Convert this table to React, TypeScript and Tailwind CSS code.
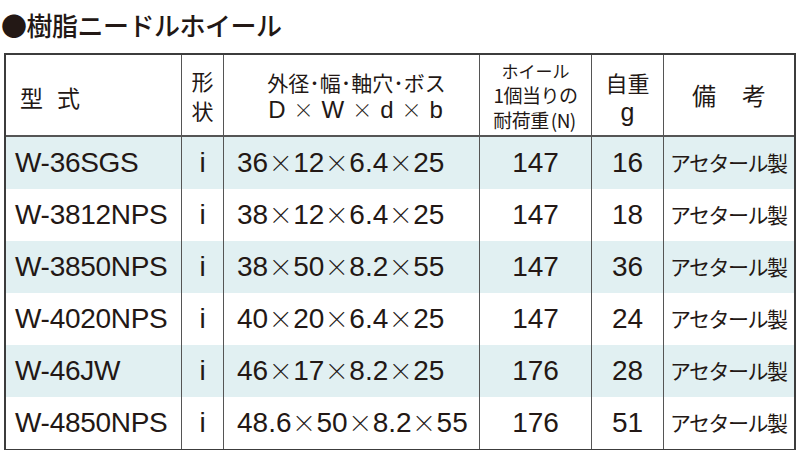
import React from "react";

const rows = [
  { m: "W-36SGS", d: ["36", "12", "6.4", "25"], n: "147", g: "16" },
  { m: "W-3812NPS", d: ["38", "12", "6.4", "25"], n: "147", g: "18" },
  { m: "W-3850NPS", d: ["38", "50", "8.2", "55"], n: "147", g: "36" },
  { m: "W-4020NPS", d: ["40", "20", "6.4", "25"], n: "147", g: "24" },
  { m: "W-46JW", d: ["46", "17", "8.2", "25"], n: "176", g: "28" },
  { m: "W-4850NPS", d: ["48.6", "50", "8.2", "55"], n: "176", g: "51" },
];

function Dims({ d }: { d: string[] }) {
  return (
    <span className="whitespace-nowrap">
      {d.map((v, i) => (
        <React.Fragment key={i}>
          {i > 0 && (
            <span className="inline-block w-[25px] text-center text-[24px] leading-[28px] font-light font-['Noto_Sans_CJK_JP',sans-serif]">
              ×
            </span>
          )}
          {v}
        </React.Fragment>
      ))}
    </span>
  );
}

function X() {
  return <span className="w-[20px] text-[20px] leading-[24px] font-light font-['Noto_Sans_CJK_JP',sans-serif]">×</span>;
}

export default function App() {
  return (
    <div className="w-[800px] h-[450px] bg-white text-[#231815] overflow-hidden font-['Liberation_Sans',Arial,'Noto_Sans_CJK_JP',sans-serif]">
      <div className="h-[53px] pt-[8px] pl-[1px]">
        <div className="text-[26px] leading-[34px] font-medium tracking-[-0.5px] font-['Noto_Sans_CJK_JP',sans-serif]">
          ●樹脂ニードルホイール
        </div>
      </div>
      <div className="ml-[4px] w-[792px] border-2 border-[#3c3c3c]">
        <div className="flex h-[82px] border-b-2 border-[#555] bg-white font-['Noto_Sans_CJK_JP',sans-serif]">
          <div className="w-[176px] border-r border-[#555] flex items-center pl-[14px] pt-[4px] text-[23px] gap-[14px]">
            <span>型</span>
            <span>式</span>
          </div>
          <div className="w-[42px] border-r border-[#555] flex flex-col items-center justify-center text-[22px] leading-[30px]">
            <span>形</span>
            <span>状</span>
          </div>
          <div className="w-[256px] border-r border-[#555] flex flex-col items-center justify-center">
            <span className="text-[21px] leading-[30px] pl-[10px] whitespace-nowrap">外径･幅･軸穴･ボス</span>
            <span className="flex items-center gap-[8px] text-[24px] leading-[26px] pl-[8px] font-['Liberation_Sans',Arial,sans-serif]">
              <span>D</span>
              <X />
              <span>W</span>
              <X />
              <span>d</span>
              <X />
              <span>b</span>
            </span>
          </div>
          <div className="w-[112px] border-r border-[#555] flex flex-col items-center justify-center pt-[2px]">
            <span className="text-[17px] leading-[22px]">ホイール</span>
            <span className="text-[19px] leading-[25px] tracking-[-0.5px]">1個当りの</span>
            <span className="text-[19px] leading-[25px] tracking-[-0.5px]">
              耐荷重<span className="mx-[2px]">(N)</span>
            </span>
          </div>
          <div className="w-[72px] border-r border-[#555] flex flex-col items-center justify-center pt-[2px]">
            <span className="text-[22px] leading-[31px]">自重</span>
            <span className="text-[25px] leading-[28px] font-['Liberation_Sans',Arial,sans-serif]">g</span>
          </div>
          <div className="flex-1 flex items-center justify-center text-[24px] gap-[26px]">
            <span>備</span>
            <span>考</span>
          </div>
        </div>
        {rows.map((r, i) => (
          <div key={r.m} className={`flex h-[52px] text-[28px] ${i % 2 === 0 ? "bg-[#e1f0f2]" : "bg-white"}`}>
            <div className="w-[176px] border-r border-[#555] flex items-center pl-[9px] tracking-[-0.3px]">{r.m}</div>
            <div className="w-[42px] border-r border-[#555] flex items-center justify-center">i</div>
            <div className="w-[256px] border-r border-[#555] flex items-center pl-[13px]">
              <Dims d={r.d} />
            </div>
            <div className="w-[112px] border-r border-[#555] flex items-center justify-center">{r.n}</div>
            <div className="w-[72px] border-r border-[#555] flex items-center justify-center">{r.g}</div>
            <div className="flex-1 flex items-center pl-[6px] text-[21px] tracking-[-1.5px] font-['Noto_Sans_CJK_JP',sans-serif]">
              アセタール製
            </div>
          </div>
        ))}
      </div>
    </div>
  );
}
